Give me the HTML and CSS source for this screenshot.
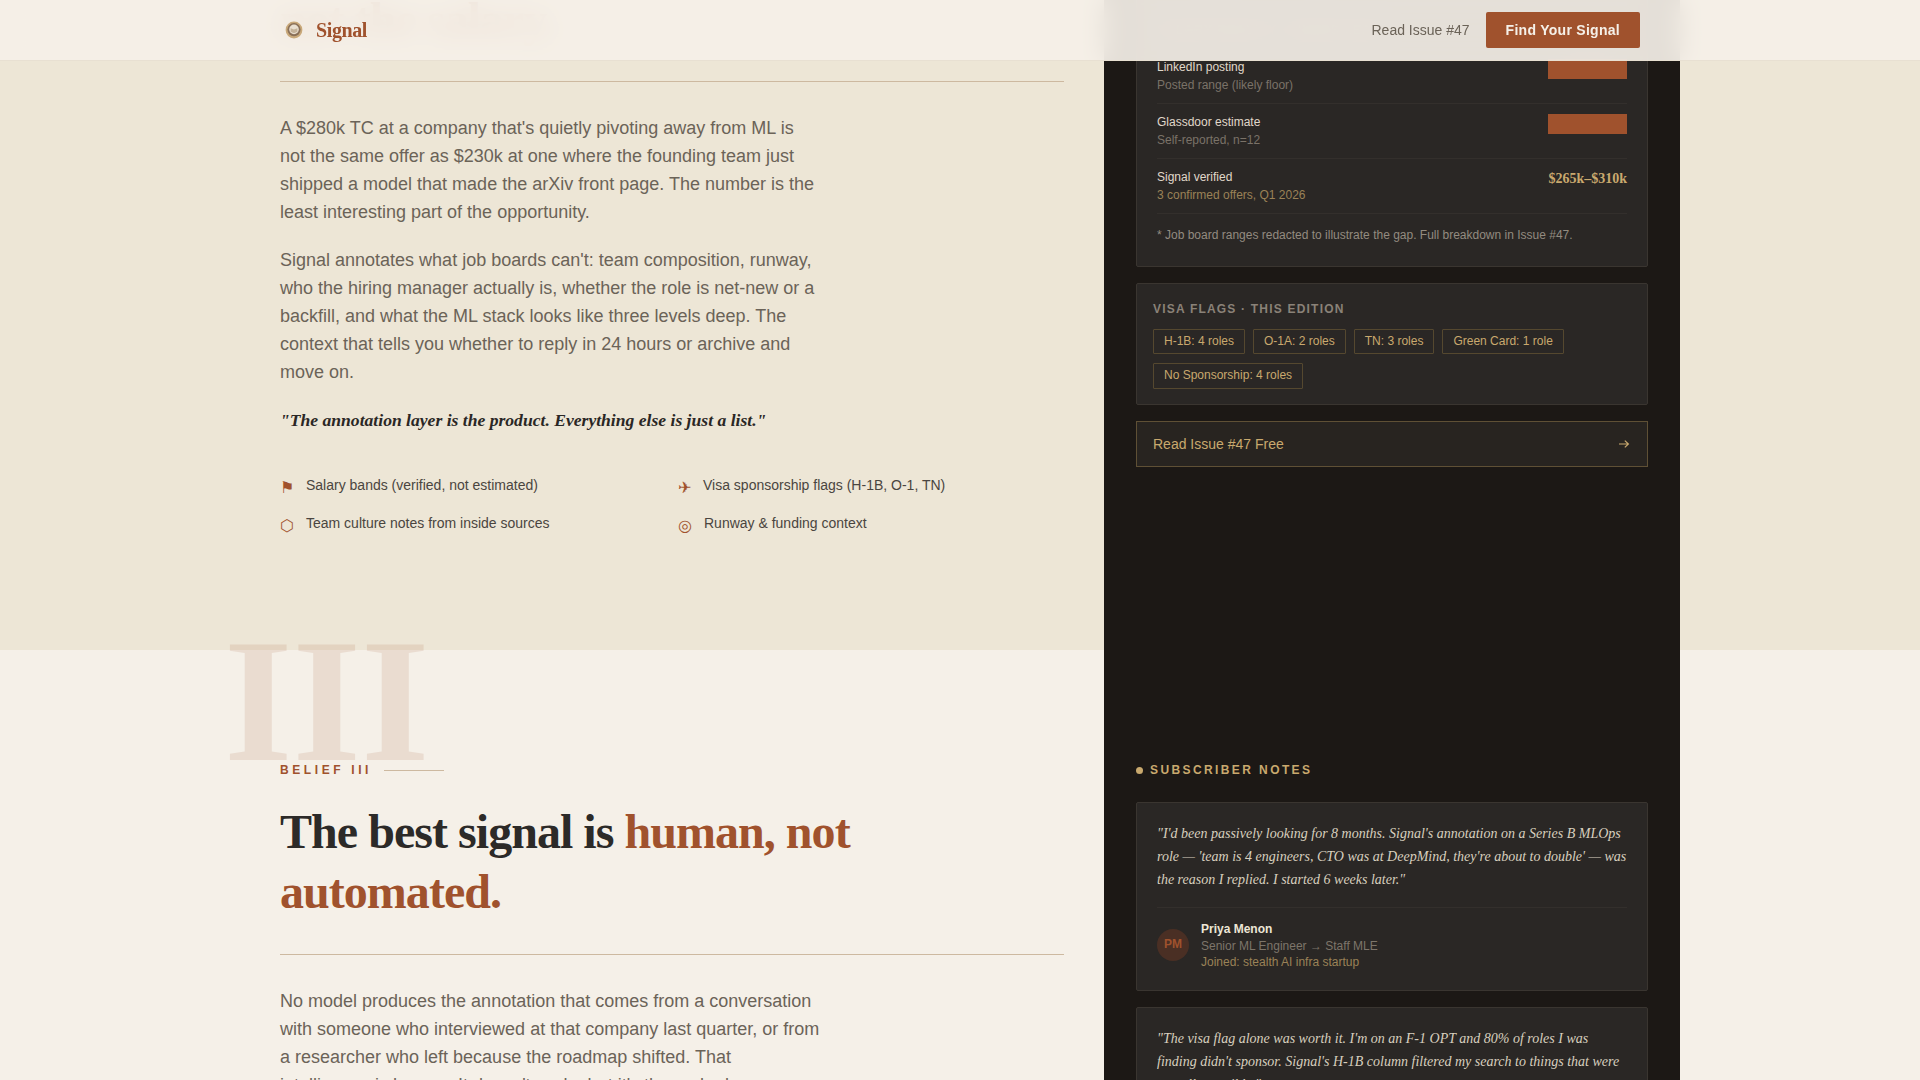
FILE: index.html
```html
<!DOCTYPE html>
<html lang="en">
<head>
<meta charset="utf-8">
<title>Signal</title>
<link rel="stylesheet" href="styles.css">
</head>
<body>
<header class="nav">
  <a class="brand">
    <svg class="brand-icon" viewBox="0 0 18 18" aria-hidden="true">
      <circle cx="9" cy="9" r="8.4" fill="#c9a97a"/>
      <circle cx="9" cy="8.6" r="6.6" fill="#8a7058"/>
      <circle cx="9" cy="8.4" r="4.8" fill="#e9dfd0"/>
      <path d="M5.6 7.2 9 8.6l3.4-1.4v3.6L9 12.2 5.6 10.8z" fill="#c4b299"/>
    </svg>
    <span class="brand-name">Signal</span>
  </a>
  <div class="nav-actions">
    <a class="nav-link">Read Issue #47</a>
    <a class="nav-cta">Find Your Signal</a>
  </div>
</header>

<div class="page">
  <main class="sections">
    <section class="belief belief-tan">
      <h2 class="headline"><em>not the salary.</em></h2>
      <hr class="rule">
      <div class="copy">
        <p>A $280k TC at a company that's quietly pivoting away from ML is not the same offer as $230k at one where the founding team just shipped a model that made the arXiv front page. The number is the least interesting part of the opportunity.</p>
        <p>Signal annotates what job boards can't: team composition, runway, who the hiring manager actually is, whether the role is net-new or a backfill, and what the ML stack looks like three levels deep. The context that tells you whether to reply in 24 hours or archive and move on.</p>
      </div>
      <blockquote class="pull">"The annotation layer is the product. Everything else is just a list."</blockquote>
      <ul class="features">
        <li><span class="f-icon">⚑</span><span>Salary bands (verified, not estimated)</span></li>
        <li><span class="f-icon">✈</span><span>Visa sponsorship flags (H-1B, O-1, TN)</span></li>
        <li><span class="f-icon">⬡</span><span>Team culture notes from inside sources</span></li>
        <li><span class="f-icon">◎</span><span>Runway &amp; funding context</span></li>
      </ul>
    </section>

    <section class="belief belief-cream">
      <span class="numeral">III</span>
      <div class="eyebrow"><span>BELIEF III</span><i class="eyebrow-line"></i></div>
      <h2 class="headline">The best signal is <em>human, not automated.</em></h2>
      <hr class="rule">
      <div class="copy">
        <p>No model produces the annotation that comes from a conversation with someone who interviewed at that company last quarter, or from a researcher who left because the roadmap shifted. That intelligence is human. It doesn't scale, but it's the real edge.</p>
      </div>
    </section>
  </main>

  <aside class="sidebar">
    <div class="card salary-card">
      <div class="card-title">SALARY REALITY · MLOPS LEAD</div>
      <div class="s-row">
        <div><div class="s-name">LinkedIn posting</div><div class="s-sub">Posted range (likely floor)</div></div>
        <span class="redact"></span>
      </div>
      <div class="s-row">
        <div><div class="s-name">Glassdoor estimate</div><div class="s-sub">Self-reported, n=12</div></div>
        <span class="redact"></span>
      </div>
      <div class="s-row">
        <div><div class="s-name">Signal verified</div><div class="s-sub gold-dim">3 confirmed offers, Q1 2026</div></div>
        <span class="s-val">$265k–$310k</span>
      </div>
      <p class="s-note">* Job board ranges redacted to illustrate the gap. Full breakdown in Issue #47.</p>
    </div>

    <div class="card visa-card">
      <div class="card-title">VISA FLAGS · THIS EDITION</div>
      <div class="tags">
        <span class="tag">H-1B: 4 roles</span>
        <span class="tag">O-1A: 2 roles</span>
        <span class="tag">TN: 3 roles</span>
        <span class="tag">Green Card: 1 role</span>
        <span class="tag">No Sponsorship: 4 roles</span>
      </div>
    </div>

    <a class="read-cta">
      <span>Read Issue #47 Free</span>
      <svg class="arrow" viewBox="0 0 12 12" aria-hidden="true"><path d="M1 6h9.5M6.8 2.6 10.4 6 6.8 9.4" fill="none" stroke="currentColor" stroke-width="1.2"/></svg>
    </a>

    <div class="notes-head"><i class="dot"></i><span>SUBSCRIBER NOTES</span></div>

    <article class="card note">
      <p class="note-quote">"I'd been passively looking for 8 months. Signal's annotation on a Series B MLOps role — 'team is 4 engineers, CTO was at DeepMind, they're about to double' — was the reason I replied. I started 6 weeks later."</p>
      <div class="note-foot">
        <span class="avatar">PM</span>
        <div>
          <div class="note-name">Priya Menon</div>
          <div class="note-role">Senior ML Engineer → Staff MLE</div>
          <div class="note-joined">Joined: stealth AI infra startup</div>
        </div>
      </div>
    </article>

    <article class="card note">
      <p class="note-quote">"The visa flag alone was worth it. I'm on an F-1 OPT and 80% of roles I was finding didn't sponsor. Signal's H-1B column filtered my search to things that were actually possible."</p>
    </article>
  </aside>
</div>
</body>
</html>
```

FILE: styles.css
```css
* { box-sizing: border-box; }
html, body { margin: 0; height: 100%; overflow: hidden; }
body {
  font-family: "Liberation Sans", Arial, sans-serif;
  line-height: 1.6;
  background: #f5f0e8;
  color: #2a2725;
}
a { text-decoration: none; }

.nav {
  position: fixed;
  top: 0; left: 0; right: 0;
  z-index: 10;
  height: 61px;
  padding: 0 280px;
  display: flex;
  align-items: center;
  justify-content: space-between;
  background: rgba(245, 240, 232, 0.92);
  backdrop-filter: blur(12px);
  border-bottom: 1px solid #e8e0d2;
}
.brand { display: flex; align-items: center; gap: 13px; padding-left: 5px; }
.brand-icon { width: 18px; height: 18px; }
.brand-name {
  font-family: "Liberation Serif", Georgia, serif;
  font-weight: 700;
  font-size: 20px;
  letter-spacing: -0.02em;
  color: #a0522d;
}
.nav-actions { display: flex; align-items: center; gap: 16px; }
.nav-link { font-size: 14px; color: #6b6358; }
.nav-cta {
  display: block;
  height: 36px;
  line-height: 36px;
  padding: 0 20px;
  background: #a0522d;
  color: #f5f0e8;
  font-size: 14px;
  font-weight: 700;
  letter-spacing: 0.02em;
  border-radius: 2px;
}

.page {
  display: grid;
  grid-template-columns: 280px 824px 576px 1fr;
  margin-top: -10px;
}
.sections { grid-column: 1 / -1; grid-row: 1; }
.sidebar {
  grid-column: 3;
  grid-row: 1;
  z-index: 2;
  background: #1c1815;
  padding: 0 32px;
  margin-top: 6px;
}

.belief { position: relative; padding: 0 0 0 280px; }
.belief-tan { background: #ede6d6; height: 660px; }
.belief-cream { background: #f5f0e8; height: 500px; padding-top: 111px; }

.headline {
  margin: 0;
  width: 600px;
  font-family: "Liberation Serif", Georgia, serif;
  font-size: 48px;
  font-weight: 700;
  line-height: 60px;
  letter-spacing: -0.02em;
  color: #2c2a28;
}
.headline em { font-style: normal; color: #a0522d; }
.rule {
  width: 784px;
  height: 1px;
  margin: 31px 0 0;
  border: 0;
  background: #cdb9a0;
}
.belief-cream .rule { margin-top: 32px; }
.copy { width: 542px; margin-top: 32px; font-size: 18px; line-height: 28px; color: #6b6358; }
.copy p { margin: 0 0 20px; }
.pull {
  margin: 19px 0 0;
  font-family: "Liberation Serif", Georgia, serif;
  font-style: italic;
  font-weight: 700;
  font-size: 17.6px;
  line-height: 28px;
  color: #2a2725;
}
.features {
  list-style: none;
  width: 784px;
  margin: 40px 0 0;
  padding: 0;
  display: grid;
  grid-template-columns: 1fr 1fr;
  gap: 11.4px 12px;
  font-size: 14px;
  color: #4a4540;
}
.features li { display: flex; gap: 12px; align-items: flex-start; }
.f-icon { font-size: 16px; margin-top: 1px; color: #a0522d; }

.numeral {
  position: absolute;
  left: 224px;
  top: -37px;
  font-family: "Liberation Serif", Georgia, serif;
  font-size: 176px;
  font-weight: 700;
  line-height: 1;
  color: #a0522d;
  opacity: 0.12;
}
.eyebrow {
  display: flex;
  align-items: center;
  gap: 12px;
  font-size: 12px;
  font-weight: 700;
  letter-spacing: 0.3em;
  color: #a0522d;
}
.eyebrow-line { width: 60px; height: 1px; background: #cdb9a0; }
.belief-cream .headline { margin-top: 22px; }

.card {
  background: #2a2725;
  border: 1px solid #3a3530;
  border-radius: 2px;
}
.salary-card { padding: 0 20px 21px; }
.card-title {
  font-size: 12px;
  font-weight: 700;
  letter-spacing: 0.1em;
  color: #8a8278;
}
.salary-card .card-title { height: 52px; padding-top: 24px; }
.s-row {
  display: flex;
  justify-content: space-between;
  align-items: flex-start;
  padding: 9px 0;
  border-bottom: 1px solid #332f2c;
}
.s-name { font-size: 12px; line-height: 18px; color: #e0d8ca; }
.s-sub { font-size: 12px; line-height: 18px; color: #7a7268; }
.gold-dim { color: #9a8257; }
.redact { display: block; width: 79px; height: 20px; margin-top: 1px; background: #a0522d; }
.s-val {
  font-family: "Liberation Serif", Georgia, serif;
  font-size: 14px;
  font-weight: 700;
  line-height: 22px;
  color: #c9a96e;
}
.s-note { margin: 11px 0 0; font-size: 12px; line-height: 20px; color: #938b80; }

.visa-card { margin-top: 16px; padding: 16px 16px 15px; }
.tags { display: flex; flex-wrap: wrap; gap: 9px 8px; margin-top: 10px; }
.tag {
  padding: 2px 10px;
  border: 1px solid #55482f;
  border-radius: 1px;
  font-size: 12px;
  color: #c9a96e;
}
.read-cta {
  margin-top: 16px;
  height: 46px;
  padding: 1px 17px 0 16px;
  display: flex;
  align-items: center;
  justify-content: space-between;
  border: 1px solid #5f5035;
  background: #282420;
  font-size: 14px;
  color: #c9a96e;
}
.arrow { width: 12px; height: 12px; }

.notes-head {
  margin-top: 294px;
  display: flex;
  align-items: center;
  gap: 7px;
  font-size: 12px;
  font-weight: 700;
  letter-spacing: 0.2em;
  color: #c9a96e;
}
.dot { width: 7px; height: 7px; border-radius: 50%; background: #c9a96e; }
.note { margin-top: 22px; padding: 19px 20px 20px; }
.note + .note { margin-top: 16px; }
.note-quote {
  margin: 0;
  font-family: "Liberation Serif", Georgia, serif;
  font-style: italic;
  font-size: 14px;
  line-height: 23px;
  color: #d8cfbf;
}
.note-foot {
  display: flex;
  align-items: center;
  gap: 12px;
  margin-top: 16px;
  padding-top: 12px;
  border-top: 1px solid #332f2c;
}
.avatar {
  width: 32px;
  height: 32px;
  border-radius: 50%;
  display: flex;
  align-items: center;
  justify-content: center;
  background: #4a2f24;
  color: #a0522d;
  font-size: 12px;
  font-weight: 700;
}
.note-name { font-size: 12px; line-height: 18px; font-weight: 700; color: #ede6d6; }
.note-role { font-size: 12px; line-height: 16px; color: #7d756a; }
.note-joined { font-size: 12px; line-height: 16px; color: #9a8257; }
```
